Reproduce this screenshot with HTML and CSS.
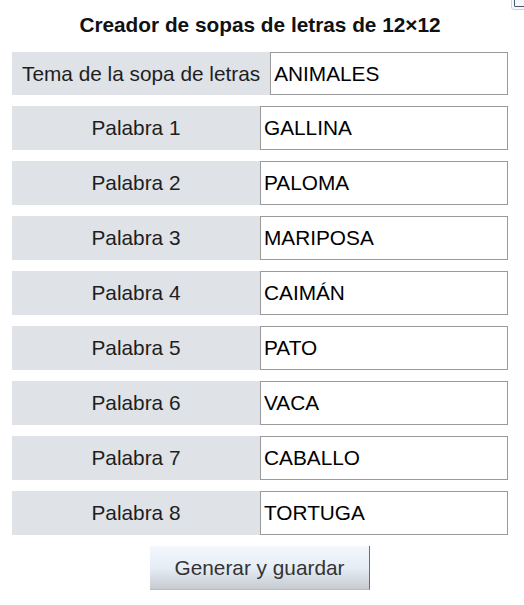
FILE: index.html
```html
<!DOCTYPE html>
<html lang="es">
<head>
  <meta charset="UTF-8" />
  <meta name="viewport" content="width=device-width, initial-scale=1.0" />
  <title>Creador de sopas de letras</title>
  <link rel="stylesheet" href="styles.css">
</head>
<body>

  <span class="corner-icon"><span class="corner-inner"></span></span>

  <h1>Creador de sopas de letras de 12×12</h1>

  <form class="sopa-form" onsubmit="return false;">
    <div class="fila">
      <label class="etiqueta" for="tema">Tema de la sopa de letras</label>
      <input class="campo" id="tema" type="text" value="ANIMALES">
    </div>
    <div class="fila">
      <label class="etiqueta" for="p1">Palabra 1</label>
      <input class="campo" id="p1" type="text" value="GALLINA">
    </div>
    <div class="fila">
      <label class="etiqueta" for="p2">Palabra 2</label>
      <input class="campo" id="p2" type="text" value="PALOMA">
    </div>
    <div class="fila">
      <label class="etiqueta" for="p3">Palabra 3</label>
      <input class="campo" id="p3" type="text" value="MARIPOSA">
    </div>
    <div class="fila">
      <label class="etiqueta" for="p4">Palabra 4</label>
      <input class="campo" id="p4" type="text" value="CAIMÁN">
    </div>
    <div class="fila">
      <label class="etiqueta" for="p5">Palabra 5</label>
      <input class="campo" id="p5" type="text" value="PATO">
    </div>
    <div class="fila">
      <label class="etiqueta" for="p6">Palabra 6</label>
      <input class="campo" id="p6" type="text" value="VACA">
    </div>
    <div class="fila">
      <label class="etiqueta" for="p7">Palabra 7</label>
      <input class="campo" id="p7" type="text" value="CABALLO">
    </div>
    <div class="fila">
      <label class="etiqueta" for="p8">Palabra 8</label>
      <input class="campo" id="p8" type="text" value="TORTUGA">
    </div>

    <div class="acciones">
      <button type="button" class="boton">Generar y guardar</button>
    </div>
  </form>

</body>
</html>
```

FILE: styles.css
```css
body {
  margin: 0;
  padding: 13px 16px 0 12px;
  background-color: white;
  color: #222;
  font-family: "Liberation Sans", Arial, sans-serif;
  font-size: 20.8px;
}

h1 {
  margin: 0 0 15px 0;
  font-size: 20.8px;
  line-height: 24px;
  text-align: center;
  color: #111;
}

.sopa-form {
  display: flex;
  flex-direction: column;
  gap: 11px;
}

.fila {
  display: flex;
  height: 44px;
}

.fila:first-child {
  height: 43px;
}

.etiqueta {
  flex: 1 1 50%;
  box-sizing: border-box;
  display: flex;
  align-items: center;
  justify-content: center;
  padding: 0 10px;
  white-space: nowrap;
  background-color: #dfe2e6;
  color: #1e1e1e;
}

.campo {
  flex: 1 1 50%;
  min-width: 0;
  box-sizing: border-box;
  height: 100%;
  margin: 0;
  padding: 0 3px;
  border: 1px solid #9a9a9a;
  background: white;
  color: black;
  font-family: inherit;
  font-size: 20.8px;
}

.acciones {
  display: flex;
  justify-content: center;
}

.boton {
  width: 220px;
  height: 44px;
  border: none;
  border-right: 1px solid #6a6d72;
  border-bottom: 1px solid #b8bcc2;
  background: linear-gradient(#f3f8fe, #e6edf5 50%, #c7cbd1);
  color: #333;
  font-family: inherit;
  font-size: 20.8px;
  cursor: pointer;
}

.boton:hover {
  background: linear-gradient(#ffffff, #dfe6ee);
}

.corner-icon {
  position: absolute;
  top: -6px;
  left: 511px;
  width: 16px;
  height: 16px;
  box-sizing: border-box;
  border: 1px solid #cfd2d6;
  border-radius: 3px;
  background: #f6f7f8;
}

.corner-inner {
  position: absolute;
  left: 2px;
  top: 2px;
  width: 10px;
  height: 8px;
  border: 1px solid #4a5475;
  border-radius: 1px;
}
```
